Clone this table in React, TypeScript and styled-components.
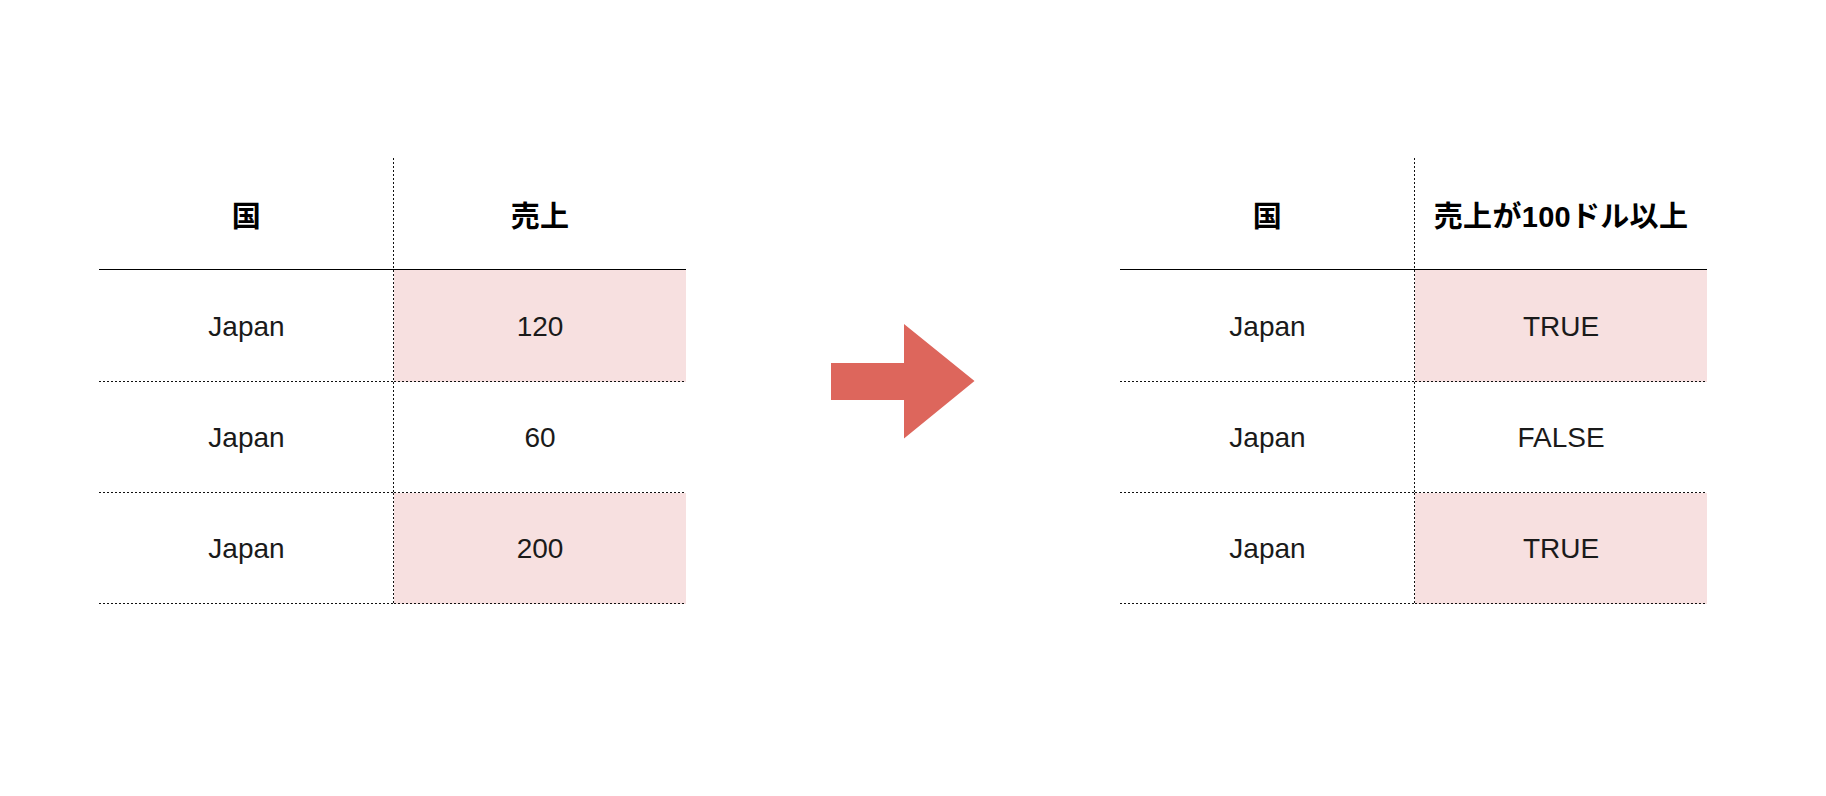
import { Fragment } from "react";
import styled, { createGlobalStyle } from "styled-components";

const GlobalStyle = createGlobalStyle`
  html, body {
    margin: 0;
    padding: 0;
    background: #ffffff;
  }
`;

type Row = {
  country: string;
  value: string;
  highlight: boolean;
};

const salesRows: Row[] = [
  { country: "Japan", value: "120", highlight: true },
  { country: "Japan", value: "60", highlight: false },
  { country: "Japan", value: "200", highlight: true },
];

const flagRows: Row[] = [
  { country: "Japan", value: "TRUE", highlight: true },
  { country: "Japan", value: "FALSE", highlight: false },
  { country: "Japan", value: "TRUE", highlight: true },
];

const dotsX = "repeating-linear-gradient(to right, #111 0 2px, transparent 2px 4px)";
const dotsY = "repeating-linear-gradient(to bottom, #111 0 2px, transparent 2px 4px)";

const Page = styled.div`
  width: 1826px;
  height: 796px;
  box-sizing: border-box;
  padding: 158px 0 0 99px;
  font-family: "Liberation Sans", "Noto Sans CJK JP", sans-serif;
  color: #111;
`;

const Wrap = styled.div`
  display: flex;
  align-items: center;
  gap: 145px;
`;

const Table = styled.div`
  display: grid;
  grid-template-columns: 295px 292px;
  grid-template-rows: 112px 112px 111px 111px;
`;

const Cell = styled.div<{ $head?: boolean; $first?: boolean; $hl?: boolean }>`
  display: flex;
  align-items: center;
  justify-content: center;
  box-sizing: border-box;
  font-size: ${(p) => (p.$head ? "29px" : "28px")};
  font-weight: ${(p) => (p.$head ? 700 : 400)};
  letter-spacing: ${(p) => (p.$head ? "0.3px" : "0")};
  color: ${(p) => (p.$head ? "#000" : "#1a1a1a")};
  background-color: ${(p) => (p.$hl ? "#f7e0e0" : "transparent")};
  border-bottom: ${(p) => (p.$head ? "1px solid #000" : "none")};
  padding-top: ${(p) => (p.$head ? "0" : "1px")};
  background-image: ${(p) =>
    [p.$head ? null : dotsX, p.$first ? dotsY : null].filter(Boolean).join(", ") || "none"};
  background-size: ${(p) =>
    [p.$head ? null : "100% 1px", p.$first ? "1px 100%" : null].filter(Boolean).join(", ") || "auto"};
  background-position: ${(p) =>
    [p.$head ? null : "left bottom", p.$first ? "right top" : null].filter(Boolean).join(", ") ||
    "0 0"};
  background-repeat: no-repeat;
`;

const Arrow = styled.svg`
  display: block;
  flex: none;
`;

function DataTable({ label, rows }: { label: string; rows: Row[] }) {
  return (
    <Table>
      <Cell $head $first>
        国
      </Cell>
      <Cell $head>{label}</Cell>
      {rows.map((r, i) => (
        <Fragment key={i}>
          <Cell $first>{r.country}</Cell>
          <Cell $hl={r.highlight}>{r.value}</Cell>
        </Fragment>
      ))}
    </Table>
  );
}

export default function App() {
  return (
    <>
      <GlobalStyle />
      <Page>
        <Wrap>
          <DataTable label="売上" rows={salesRows} />
          <Arrow width="144" height="115" viewBox="0 0 144 115">
            <polygon points="0,39 73,39 73,0 143.5,57 73,114.5 73,76 0,76" fill="#dd665c" />
          </Arrow>
          <DataTable label="売上が100ドル以上" rows={flagRows} />
        </Wrap>
      </Page>
    </>
  );
}
